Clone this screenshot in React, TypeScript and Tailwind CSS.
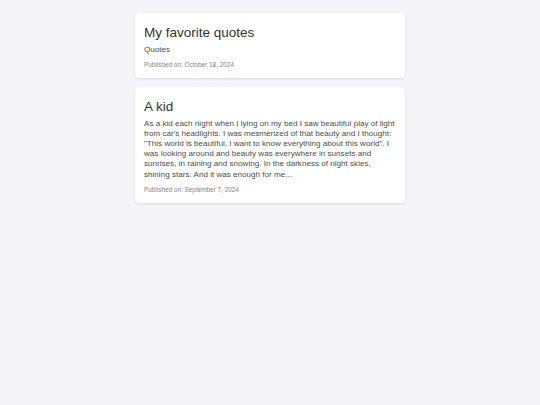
const posts = [
  {
    title: 'My favorite quotes',
    body: 'Quotes',
    date: 'October 18, 2024',
  },
  {
    title: 'A kid',
    body: 'As a kid each night when I lying on my bed I saw beautiful play of light from car\'s headlights. I was mesmerized of that beauty and I thought: "This world is beautiful, I want to know everything about this world". I was looking around and beauty was everywhere in sunsets and sunrises, in raining and snowing. In the darkness of night skies, shining stars. And it was enough for me...',
    date: 'September 7, 2024',
  },
]

export default function App() {
  return (
    <div className="min-h-screen bg-[#f4f4f9] font-['Liberation_Sans',Arial,sans-serif]">
      <div className="w-[270px] mx-auto pt-[13px] flex flex-col gap-[9px]">
        {posts.map((post) => (
          <div
            key={post.title}
            className="bg-white rounded-[4px] shadow-[0_1px_3px_rgba(0,0,0,0.1)] px-[9px] pt-[11px] pb-[9px]"
          >
            <h2 className="text-[13.5px] leading-[17px] text-[#333]">{post.title}</h2>
            <p className="mt-[4px] text-[8.1px] leading-[10.1px] text-[#4d4d4d]">{post.body}</p>
            <p className="mt-[6px] text-[6.4px] leading-[8px] text-[#888]">
              Published on: {post.date}
            </p>
          </div>
        ))}
      </div>
    </div>
  )
}
